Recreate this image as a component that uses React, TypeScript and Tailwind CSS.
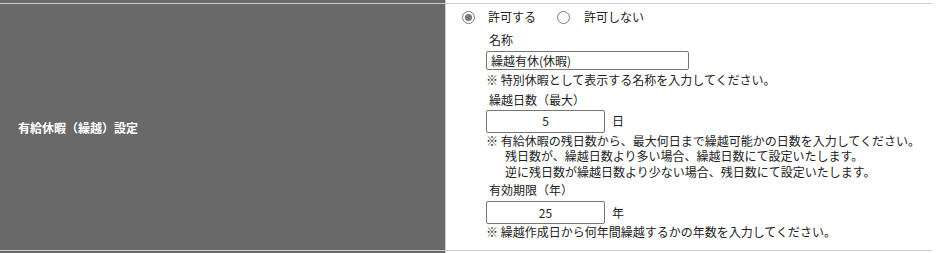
import React from "react";

const font = { fontFamily: '"Noto Sans CJK JP", "Noto Sans", sans-serif' };

function Radio({ checked }: { checked: boolean }) {
  return (
    <svg width="13" height="13" viewBox="0 0 13 13" className="shrink-0">
      <circle cx="6.5" cy="6.5" r="6" fill="#fff" stroke="#7a7a7a" strokeWidth="1" />
      {checked && <circle cx="6.5" cy="6.5" r="3.6" fill="#7a7a7a" />}
    </svg>
  );
}

export default function App() {
  return (
    <div className="w-[937px] h-[253px] bg-white text-[12px] text-[#222]" style={font}>
      <div className="w-[932px]">
        {/* previous row */}
        <div className="flex h-[3px]">
          <div className="w-[445px] bg-[#696969]" />
          <div className="w-px bg-[#cccccc]" />
          <div className="flex-1 bg-white" />
        </div>
        <div className="h-px bg-[#cccccc]" />
        {/* main row */}
        <div className="flex h-[246px]">
          <div className="w-[445px] bg-[#696969] flex items-center pl-[18px] pt-[1px]">
            <span className="text-white font-bold text-[12px] leading-[16px]">有給休暇（繰越）設定</span>
          </div>
          <div className="w-px bg-[#cccccc]" />
          <div className="flex-1 pl-[16px] pt-[4px]">
            <div className="flex items-center h-[18px]">
              <Radio checked />
              <span className="ml-[13px] leading-[16px]">許可する</span>
              <span className="ml-[21px]"><Radio checked={false} /></span>
              <span className="ml-[14px] leading-[16px]">許可しない</span>
            </div>
            <div className="ml-[24px]">
              <div className="mt-[6px] h-[16px] leading-[16px] pl-[3px]">名称</div>
              <div className="mt-[3px] w-[203px] h-[19px] border border-[#767676] rounded-[2px] flex items-center pl-[4px] leading-[16px]">
                繰越有休(休暇)
              </div>
              <div className="mt-[2px] leading-[15.5px]">※ 特別休暇として表示する名称を入力してください。</div>

              <div className="mt-[4px] h-[16px] leading-[16px] pl-[3px]">繰越日数（最大）</div>
              <div className="mt-[2px] flex items-center">
                <div className="w-[119px] h-[23px] border border-[#767676] rounded-[2px] flex items-center justify-center">5</div>
                <span className="ml-[7px]">日</span>
              </div>
              <div className="leading-[15.5px]">
                <div>※ 有給休暇の残日数から、最大何日まで繰越可能かの日数を入力してください。</div>
                <div className="pl-[19px]">残日数が、繰越日数より多い場合、繰越日数にて設定いたします。</div>
                <div className="pl-[19px]">逆に残日数が繰越日数より少ない場合、残日数にて設定いたします。</div>
              </div>

              <div className="mt-[3px] h-[16px] leading-[16px] pl-[3px]">有効期限（年）</div>
              <div className="mt-[3px] flex items-center">
                <div className="w-[119px] h-[23px] border border-[#767676] rounded-[2px] flex items-center justify-center">25</div>
                <span className="ml-[7px]">年</span>
              </div>
              <div className="mt-[0px] leading-[15.5px]">※ 繰越作成日から何年間繰越するかの年数を入力してください。</div>
            </div>
          </div>
        </div>
        <div className="h-px bg-[#cccccc]" />
        <div className="flex h-[2px]">
          <div className="w-[445px] bg-[#696969]" />
          <div className="w-px bg-[#cccccc]" />
          <div className="flex-1 bg-white" />
        </div>
      </div>
    </div>
  );
}
